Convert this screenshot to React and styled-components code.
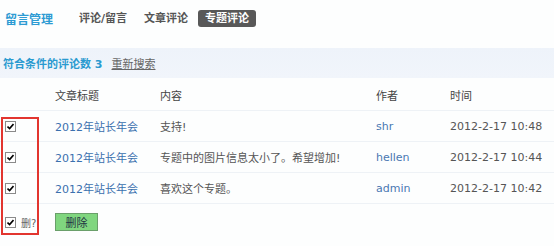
import React from "react";
import styled, { createGlobalStyle } from "styled-components";

const Global = createGlobalStyle`
  html, body { margin: 0; padding: 0; background: #fdfefe; }
  body { font-family: "DejaVu Sans", "Noto Sans CJK SC", sans-serif; font-size: 11px; color: #555; }
`;

const Page = styled.div`
  width: 554px;
  height: 246px;
  overflow: hidden;
`;

const TopBar = styled.div`
  height: 36px;
  display: flex;
  align-items: center;
  padding-left: 5px;
`;

const Title = styled.div`
  font-size: 12px;
  font-weight: bold;
  color: #2d9bd3;
  margin-right: 19px;
`;

const Tab = styled.div`
  height: 17px;
  line-height: 17px;
  padding: 0 7px;
  margin-right: 3px;
  font-size: 11px;
  font-weight: bold;
  border-radius: 3px;
  color: ${(p) => (p.$active ? "#fff" : "#555")};
  background: ${(p) => (p.$active ? "#585858" : "transparent")};
`;

const Band = styled.div`
  margin-top: 12px;
  height: 30px;
  display: flex;
  align-items: center;
  padding-left: 3px;
  background: linear-gradient(#eef3fa, #f1f5fb);
`;

const Count = styled.span`
  font-weight: bold;
  color: #2a9ad0;
`;

const Reset = styled.span`
  margin-left: 9px;
  color: #666;
  text-decoration: underline;
`;

const Table = styled.div`
  position: relative;
  margin-top: 2px;
`;

const Row = styled.div`
  display: grid;
  grid-template-columns: 55px 105px 216px 74px 1fr;
  align-items: center;
  height: ${(p) => (p.$h ? p.$h : 31)}px;
  border-bottom: ${(p) => (p.$line ? "1px solid #eef2f6" : "none")};
  box-sizing: border-box;
`;

const Cell = styled.div`
  white-space: nowrap;
  color: ${(p) => p.$color || "#555"};
  display: flex;
  align-items: center;
`;

const CheckCell = styled.div`
  padding-left: 5px;
  display: flex;
  align-items: center;
  gap: 5px;
  color: #666;
  font-size: 10px;
`;

const Box = styled.span`
  width: 9px;
  height: 9px;
  border: 1px solid #8a8a8a;
  background: #fff;
  display: inline-flex;
  align-items: center;
  justify-content: center;
`;

const DeleteButton = styled.button`
  width: 43px;
  height: 18px;
  padding: 0;
  background: #80d67f;
  border: 1px solid #6a9f6a;
  color: #234;
  font-family: "DejaVu Sans", "Noto Sans CJK SC", sans-serif;
  font-size: 11px;
`;

const Annotation = styled.div`
  position: absolute;
  left: 1px;
  top: 37px;
  width: 38px;
  height: 118px;
  border: 2px solid #e2352f;
  box-sizing: border-box;
  pointer-events: none;
`;

const Check = () => (
  <Box>
    <svg width="7" height="7" viewBox="0 0 7 7">
      <path d="M0.5 3.5 L2.6 5.6 L6.5 1" stroke="#000" strokeWidth="1.6" fill="none" />
    </svg>
  </Box>
);

const rows = [
  { content: "支持!", author: "shr", time: "2012-2-17 10:48" },
  { content: "专题中的图片信息太小了。希望增加!", author: "hellen", time: "2012-2-17 10:44" },
  { content: "喜欢这个专题。", author: "admin", time: "2012-2-17 10:42" },
];

export default function App() {
  return (
    <Page>
      <Global />
      <TopBar>
        <Title>留言管理</Title>
        <Tab>评论/留言</Tab>
        <Tab>文章评论</Tab>
        <Tab $active>专题评论</Tab>
      </TopBar>
      <Band>
        <Count>符合条件的评论数 3</Count>
        <Reset>重新搜索</Reset>
      </Band>
      <Table>
        <Row $line>
          <Cell />
          <Cell $color="#444">文章标题</Cell>
          <Cell $color="#444">内容</Cell>
          <Cell $color="#444">作者</Cell>
          <Cell $color="#444">时间</Cell>
        </Row>
        {rows.map((r, i) => (
          <Row key={i} $line>
            <CheckCell><Check /></CheckCell>
            <Cell $color="#3b70ae">2012年站长年会</Cell>
            <Cell>{r.content}</Cell>
            <Cell $color="#4a78b2">{r.author}</Cell>
            <Cell>{r.time}</Cell>
          </Row>
        ))}
        <Row $h={36}>
          <CheckCell><Check />删?</CheckCell>
          <Cell><DeleteButton>删除</DeleteButton></Cell>
        </Row>
        <Annotation />
      </Table>
    </Page>
  );
}
